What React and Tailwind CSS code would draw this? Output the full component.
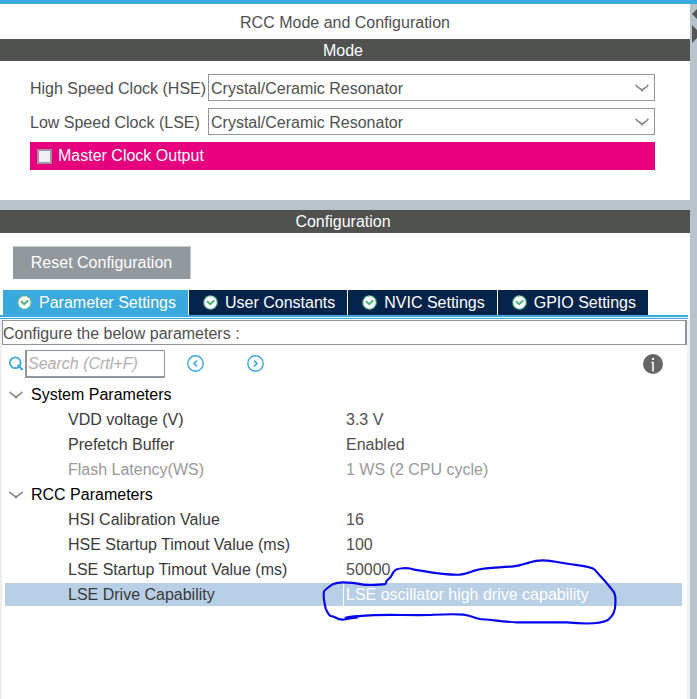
import React, { useState } from 'react';

const TABS = ['Parameter Settings', 'User Constants', 'NVIC Settings', 'GPIO Settings'];

const CLOCKS = [
  { id: 'hse', label: 'High Speed Clock (HSE)' },
  { id: 'lse', label: 'Low Speed Clock (LSE)' }
];

const GROUPS = [
  {
    name: 'System Parameters',
    rows: [
      { name: 'VDD voltage (V)', value: '3.3 V' },
      { name: 'Prefetch Buffer', value: 'Enabled' },
      { name: 'Flash Latency(WS)', value: '1 WS (2 CPU cycle)', disabled: true }
    ]
  },
  {
    name: 'RCC Parameters',
    rows: [
      { name: 'HSI Calibration Value', value: '16' },
      { name: 'HSE Startup Timout Value (ms)', value: '100' },
      { name: 'LSE Startup Timout Value (ms)', value: '50000' },
      { name: 'LSE Drive Capability', value: 'LSE oscillator high drive capability', selected: true }
    ]
  }
];

const Chevron = ({ className }) => (
  <svg className={className} width="14" height="8" viewBox="0 0 14 8" fill="none" stroke="#858585" strokeWidth="1.7" aria-hidden="true">
    <path d="M0.8 0.800 C1.5 2.500 3 3.600 4.500 4.200 C5.800 4.800 6.400 5.600 7 6.600 C7.600 5.600 8.200 4.800 9.500 4.200 C11 3.600 12.500 2.500 13.200 0.800" />
  </svg>
);

const CheckIcon = () => (
  <svg className="shrink-0" width="15" height="15" viewBox="0 0 15 15" fill="none" aria-hidden="true">
    <circle cx="7.500" cy="7.500" r="6.700" fill="#fff" stroke="#55b585" strokeWidth="1.300" strokeDasharray="3.200 1" />
    <path d="M4 6.300 L7.200 9.300 L11.300 5.300" stroke="#4fb37c" strokeWidth="1.900" />
  </svg>
);

const SearchIcon = () => (
  <svg className="shrink-0" width="15" height="15" viewBox="0 0 15 15" fill="none" stroke="#3aa9dd" aria-hidden="true">
    <circle cx="6.300" cy="6.800" r="5.400" strokeWidth="1.800" />
    <path d="M8.500 9 L13.800 14" strokeWidth="2" />
  </svg>
);

const StepIcon = ({ next = false }) => (
  <svg width="17" height="17" viewBox="0 0 17 17" fill="none" stroke="#3aa9dd" aria-hidden="true">
    <circle cx="8.500" cy="8.500" r="7.700" strokeWidth="1.400" />
    <path d={next ? 'M7 5.500 L10 8.500 L7 11.500' : 'M10 5.500 L7 8.500 L10 11.500'} strokeWidth="1.700" />
  </svg>
);

const InfoIcon = () => (
  <svg width="20" height="20" viewBox="0 0 20 20" aria-hidden="true">
    <circle cx="10" cy="10" r="10" fill="#666" />
    <rect x="9" y="4" width="2" height="2" fill="#fff" />
    <path d="M8.500 8.500 H10 V17.500" fill="none" stroke="#fff" strokeWidth="1.600" />
  </svg>
);

// Hand-drawn pen loop around the highlighted value
const PenLoop = () => (
  <svg
    className="absolute -top-7 -left-[25px] pointer-events-none"
    width="300"
    height="72"
    viewBox="57 42 900 216"
    fill="none"
    stroke="#0505ee"
    strokeWidth="6.5"
    strokeLinecap="round"
    strokeLinejoin="round"
    aria-hidden="true"
  >
    <path d="M256 129 C235 131 215 134 190 131 C165 126 150 124 128 124 C100 124 92 134 74 148 C68 155 72 180 77 202 C82 214 86 222 92 225 L101 227 C109 231 117 236 127 236 C142 235 155 232 172 229 M137 230 C150 225 180 226 210 223 C260 220 320 223 385 222 C430 220 460 218 490 221 C515 224 520 231 540 234 C570 236 610 242 650 244 L800 244 C850 249 900 250 924 237 C942 223 946 205 946 190 C948 160 944 154 932 141 C915 118 900 105 884 86 C872 73 830 75 772 63 C735 55 710 57 690 64 C670 69 660 75 640 76 C600 80 560 79 535 86 C510 92 500 99 480 101 C430 103 390 93 343 86 C325 79 290 80 282 91 C274 103 275 107 265 115 C255 121 262 123 256 129" />
  </svg>
);

const SectionBar = ({ className, children }) => (
  <h2 className={`bg-[#505250] pr-1 text-center leading-6 text-white ${className}`}>{children}</h2>
);

const ModePanel = () => (
  <section className="bg-white pb-[30px]">
    <h1 className="pt-1 h-[35px] text-center leading-[29px]">RCC Mode and Configuration</h1>
    <SectionBar className="h-[22px]">Mode</SectionBar>
    <div className="flex flex-col gap-[7px] pt-[13px] pl-[30px] pr-[35px]">
      {CLOCKS.map((clock) => (
        <div key={clock.id} className="flex items-center">
          <label htmlFor={clock.id} className="w-[178px] shrink-0 whitespace-nowrap pt-0.5">
            {clock.label}
          </label>
          <div className="relative flex-1">
            <select
              id={clock.id}
              className="block w-full h-[27px] appearance-none border border-[#8f969c] bg-white px-0.5 pt-0.5 leading-6 outline-none"
            >
              <option>Crystal/Ceramic Resonator</option>
              <option>BYPASS Clock Source</option>
              <option>Disable</option>
            </select>
            <Chevron className="absolute right-1.5 top-2.5 pointer-events-none" />
          </div>
        </div>
      ))}
      <label className="flex items-center gap-1.5 h-7 bg-[#e6007e] pl-[7px] text-white">
        <input
          type="checkbox"
          className="size-[15px] appearance-none border-2 border-[#a493a8] bg-[#f0f0f4] checked:bg-[#03234b]"
        />
        Master Clock Output
      </label>
    </div>
  </section>
);

const ParameterTable = () => (
  <table className="w-full table-fixed border-separate border-spacing-0 text-left">
    <colgroup>
      <col className="w-[338px]" />
      <col />
    </colgroup>
    {GROUPS.map((group) => (
      <tbody key={group.name}>
        <tr>
          <th colSpan={2} className="p-0 font-normal">
            <button type="button" className="flex items-center gap-2 h-[25px] pl-1 text-black">
              <Chevron />
              {group.name}
            </button>
          </th>
        </tr>
        {group.rows.map((row) => (
          <tr
            key={row.name}
            className={row.disabled ? 'text-[#999999]' : 'text-[#3a3a3a]'}
          >
            <th
              className={`h-[25px] p-0 pl-[63px] border-y border-white bg-clip-padding font-normal leading-5 whitespace-nowrap ${
                row.selected ? 'bg-[#b8cfe5]' : ''
              }`}
            >
              {row.name}
            </th>
            <td
              className={`relative p-0 pl-0.5 border-y border-l border-white bg-clip-padding leading-5 whitespace-nowrap ${
                row.selected ? 'bg-[#b8cfe5] text-white' : ''
              } ${!row.selected && !row.disabled ? 'text-[#505050]' : ''}`}
            >
              {row.value}
              {row.selected && <PenLoop />}
            </td>
          </tr>
        ))}
      </tbody>
    ))}
  </table>
);

const ConfigurationPanel = () => {
  const [active, setActive] = useState(TABS[0]);

  return (
    <section className="flex flex-1 flex-col bg-white">
      <SectionBar className="h-[23px]">Configuration</SectionBar>
      <div className="px-[13px] pt-[13px] pb-[11px]">
        <button type="button" className="block h-[33px] w-[178px] border-t border-r border-[#c3c8cb] bg-[#91989e] text-white">
          Reset Configuration
        </button>
      </div>
      <div role="tablist" className="flex gap-px pl-[3px]">
        {TABS.map((tab) => (
          <button
            key={tab}
            type="button"
            role="tab"
            aria-selected={tab === active}
            onClick={() => setActive(tab)}
            className={`flex items-center gap-[7px] h-[25px] pl-3.5 pr-3 whitespace-nowrap text-white ${
              tab === active ? 'bg-[#3aa9dd]' : 'bg-[#03234b]'
            }`}
          >
            <CheckIcon />
            {tab}
          </button>
        ))}
      </div>
      <div className="mr-0.5 h-1 border-t-2 border-b border-[#3aa9dd] bg-[#e8f6fc]" />
      <div className="flex-1 border-l-2 border-r-3 border-[#f0f0f2] pt-px">
        <p className="h-[25px] border border-r-2 border-[#8f969c] leading-[25px]">Configure the below parameters :</p>
        <div className="flex items-center h-[37px] pl-[7px] pr-6">
          <SearchIcon />
          <input
            type="search"
            aria-label="Search"
            placeholder="Search (Crtl+F)"
            className="ml-px h-7 w-[140px] border-2 border-t border-r border-[#8f969c] px-px pt-0.5 italic outline-none placeholder:text-[#b0b0b0]"
          />
          <button type="button" aria-label="Previous match" className="ml-[22px]">
            <StepIcon />
          </button>
          <button type="button" aria-label="Next match" className="ml-[43px]">
            <StepIcon next />
          </button>
          <button type="button" aria-label="Information" className="ml-auto">
            <InfoIcon />
          </button>
        </div>
        <div className="pl-[3px] pr-[5px]">
          <ParameterTable />
        </div>
      </div>
    </section>
  );
};

export default function App() {
  return (
    <div className="flex min-h-screen flex-col border-t-4 border-[#3aa9dd] bg-[#b8c4ca] font-['Liberation_Sans',Arial,sans-serif] text-base text-[#505050]">
      <div className="flex flex-1">
        <main className="flex min-w-0 flex-1 flex-col gap-2.5">
          <ModePanel />
          <ConfigurationPanel />
        </main>
        <aside className="w-[7px] shrink-0 overflow-hidden pt-1">
          <svg width="14" height="36" viewBox="0 0 14 36" fill="#555657" className="ml-0.5 max-w-none" aria-hidden="true">
            <path d="M0 6 L5 1 H9 V11 H5 Z" />
            <path d="M0 17 L9 26 L0 35 Z" />
          </svg>
        </aside>
      </div>
    </div>
  );
}
